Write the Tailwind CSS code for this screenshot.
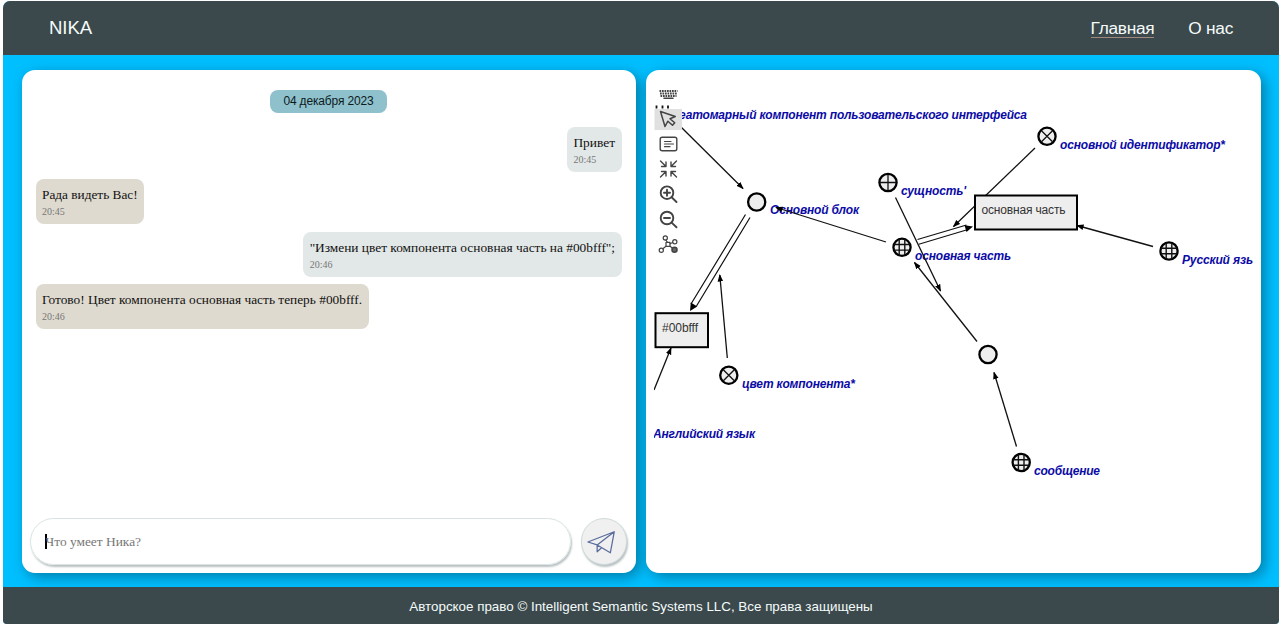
<!DOCTYPE html>
<html lang="ru">
<head>
<meta charset="utf-8">
<title>NIKA</title>
<script src="https://cdn.jsdelivr.net/npm/@tailwindcss/browser@4"></script>
</head>
<body class="h-[624px] overflow-hidden bg-white pl-[3px] pr-px pt-px font-['Liberation_Sans',sans-serif]">
<div class="flex h-[623px] flex-col overflow-hidden rounded-t-[7px] rounded-b-[4px] bg-[#00bfff]">
  <header class="flex h-[54px] shrink-0 items-center justify-between bg-[#3b494c] pl-[46px] pr-[46px] text-[#f5fbfa]">
    <div class="text-[18.6px] leading-none tracking-[-0.1px]">NIKA</div>
    <nav class="flex gap-[34px] text-[17.3px] leading-[18px] tracking-[-0.28px]">
      <a class="border-b border-[#a1887f]">Главная</a>
      <a>О нас</a>
    </nav>
  </header>

  <main class="flex h-[532px] shrink-0 gap-[10px] pl-[19px] pr-[18px] pt-[15px]">
    <section class="flex h-[503px] w-[614px] flex-col rounded-[13px] bg-white px-[8px] pt-[20px] shadow-[4px_4px_14px_rgba(0,0,0,0.35)]">
      <div class="flex flex-1 flex-col gap-[7.4px] pl-[5.5px] pr-[6.5px] font-['Liberation_Serif',serif]">
        <div class="mb-[6.5px] flex h-[23px] w-[117px] items-center justify-center self-center rounded-[8px] bg-[#8fc1cc] font-['Liberation_Sans',sans-serif] text-[12px] tracking-[-0.15px] text-[#0d1a1d]"><span class="pb-px">04 декабря 2023</span></div>
        <div class="h-[45px] self-end rounded-[8px] bg-[#e2e8e7] px-[6.5px] pt-[8px]">
          <p class="text-[13.4px] leading-[16px] text-[#111]">Привет</p>
          <p class="pt-[3px] text-[10px] leading-[12px] text-[#777]">20:45</p>
        </div>
        <div class="h-[45px] self-start rounded-[8px] bg-[#dedacf] px-[6.5px] pt-[8px]">
          <p class="text-[13.3px] leading-[16px] text-[#111]">Рада видеть Вас!</p>
          <p class="pt-[3px] text-[10px] leading-[12px] text-[#777]">20:45</p>
        </div>
        <div class="h-[45px] self-end rounded-[8px] bg-[#e2e8e7] px-[6.5px] pt-[8px]">
          <p class="text-[13.37px] leading-[16px] text-[#111]">"Измени цвет компонента основная часть на #00bfff";</p>
          <p class="pt-[3px] text-[10px] leading-[12px] text-[#777]">20:46</p>
        </div>
        <div class="h-[45px] self-start rounded-[8px] bg-[#dedacf] px-[6.5px] pt-[8px]">
          <p class="text-[13.35px] leading-[16px] text-[#111]">Готово! Цвет компонента основная часть теперь #00bfff.</p>
          <p class="pt-[3px] text-[10px] leading-[12px] text-[#777]">20:46</p>
        </div>
      </div>
      <form class="flex h-[55px] shrink-0 items-start gap-[10px]">
        <div class="flex h-[47px] w-[541px] items-center rounded-full border border-[#d9e3e4] pl-[14px] font-['Liberation_Serif',serif] text-[13.4px] text-[#777] shadow-[1px_2px_2px_rgba(80,100,105,0.4)]"><span class="h-[15px] w-[1.5px] bg-black"></span><span class="-ml-px pt-[2px]">Что умеет Ника?</span></div>
        <button type="button" class="flex h-[47px] w-[46px] items-center justify-center rounded-full border border-[#cfdada] bg-[#f0f0f0] shadow-[1px_2px_2px_rgba(80,100,105,0.4)]">
          <svg class="size-[44px]" viewBox="582 519 45 45" fill="none" stroke="#5a6c9d" stroke-width="1.3" stroke-linejoin="round"><path d="M588 541.5 615 531 611 552.500 597.500 544.500ZM615 531 597.500 544.500V551.500L602 547.300"/></svg>
        </button>
      </form>
    </section>

    <section class="h-[503px] w-[615px] rounded-[13px] bg-white px-[8px] pt-[8px] shadow-[4px_4px_14px_rgba(0,0,0,0.35)]">
      <svg class="block h-[486px] w-[599px]" viewBox="654 78 599 486">
        <defs>
          <marker id="arrow" viewBox="0 0 8 6" refX="7" refY="3" markerWidth="7.500" markerHeight="6.500" markerUnits="userSpaceOnUse" orient="auto"><path d="M0 0 8 3 0 6Z"/></marker>
          <g id="node"><circle r="8.6" fill="#eee" stroke="#000" stroke-width="2.3"/></g>
          <g id="relation"><use href="#node"/><path d="M-5.5-5.5 5.5 5.5M-5.5 5.5 5.5-5.5" stroke="#111" stroke-width="1.3"/></g>
          <g id="role"><use href="#node"/><path d="M0-8V8M-8 0H8" stroke="#111" stroke-width="1.3"/></g>
          <g id="class"><use href="#node"/><path d="M-2.8-8V8M2.8-8V8M-8-2.8H8M-8 2.8H8" stroke="#111" stroke-width="1.4"/></g>
        </defs>

        <g font-family="Liberation Sans, Arial, sans-serif" font-size="12" font-weight="bold" font-style="italic" fill="#0b0ba6">
          <text x="672" y="119" textLength="355">неатомарный компонент пользовательского интерфейса</text>
          <text x="1060" y="149" textLength="165">основной идентификатор*</text>
          <text x="901" y="195" textLength="65">сущность'</text>
          <text x="770" y="214" textLength="89">Основной блок</text>
          <text x="915" y="260" textLength="96">основная часть</text>
          <text x="1182" y="264" textLength="71">Русский язь</text>
          <text x="742" y="388" textLength="113">цвет компонента*</text>
          <text x="653" y="438" textLength="102">Английский язык</text>
          <text x="1034" y="475" textLength="66">сообщение</text>
        </g>

        <g fill="none" stroke="#111" stroke-width="1.3">
          <path d="M680 126 743 188.500" marker-end="url(#arrow)"/>
          <path d="M886 242 776 207.500" marker-end="url(#arrow)"/>
          <path d="M727.300 358 719.800 275" marker-end="url(#arrow)"/>
          <path d="M654 390 671 348" marker-end="url(#arrow)"/>
          <path d="M1035 148 953.500 226.500" marker-end="url(#arrow)"/>
          <path d="M895.500 197.500 940.500 291" marker-end="url(#arrow)"/>
          <path d="M977 341.500 914.500 262.500" marker-end="url(#arrow)"/>
          <path d="M1016.500 446.500 994 372.500" marker-end="url(#arrow)"/>
          <path d="M1153 246.500 1077 225.500" marker-end="url(#arrow)"/>
          <path d="M745.500 214.500 691 304M750 217.500 696.500 306M917.500 239.500 966.500 225M918.800 244.300 968 229.500" stroke-width="1.2"/>
        </g>
        <path d="M690 311 690.800 302.500 697.300 306.500ZM973 226.500 964.500 225.300 966.500 232Z"/>

        <g fill="#eee" stroke="#000" stroke-width="2">
          <rect x="975" y="195.500" width="102" height="34"/>
          <rect x="655.500" y="313.200" width="52.500" height="34"/>
        </g>
        <g font-family="Liberation Sans, Arial, sans-serif" font-size="12" fill="#333">
          <text x="981.500" y="214" textLength="84">основная часть</text>
          <text x="662" y="331.500" textLength="36">#00bfff</text>
        </g>

        <use href="#relation" x="1047" y="136.300"/>
        <use href="#role" x="888" y="182.500"/>
        <use href="#node" x="756.700" y="202"/>
        <use href="#class" x="902" y="247.300"/>
        <use href="#class" x="1169" y="251"/>
        <use href="#relation" x="728.800" y="375.200"/>
        <use href="#node" x="988" y="354.500"/>
        <use href="#class" x="1021.200" y="462.500"/>

        <path d="M656.500 105.500V108.500M662.500 105.500V108.500M668 105.500V108.500" stroke="#111" stroke-width="1.8"/>
        <rect x="654.500" y="109" width="27.500" height="21" fill="#e0e0e0"/>
        <g fill="none" stroke="#444" stroke-width="1.4" stroke-linecap="round" stroke-linejoin="round">
          <path d="M659.500 91H677.500M660 93.500H677M660.500 96H676.500" stroke-width="1.900" stroke-dasharray="1.700 .8" stroke-linecap="butt"/>
          <path d="M664 98.200H673" stroke-width="1.500"/>
          <path d="M660.500 111.500 665 126.500 667.900 121.200 672.500 125.300 674.700 122.800 670 118.700 675.300 116.500Z" stroke-width="1.500"/>
          <rect x="660.200" y="137.200" width="16.600" height="13.600" rx="2"/>
          <path d="M664.500 141.500H671M664.500 144H673.500M664.500 146.700H670" stroke-width="1.200"/>
          <path d="M660.500 161 666 166.500M666 162V166.500H661.500M676.500 161 671 166.500M671 162V166.500H675.500M660.500 177 666 171.500M661.500 171.500H666V176M676.500 177 671 171.500M671 176V171.500H675.500"/>
          <g stroke-width="1.900"><circle cx="667" cy="192.700" r="6.300"/><path d="M671.600 197.300 676.500 202M664 192.700H670M667 189.700V195.700"/><circle cx="667" cy="218" r="6.300"/><path d="M671.600 222.600 676.500 227.300M664 218H670"/></g>
          <g stroke-width="1.200"><circle cx="665.300" cy="238" r="2.100"/><circle cx="674.800" cy="241.800" r="2.100"/><circle cx="661.300" cy="250.300" r="2.100"/><rect x="666" y="242.300" width="4" height="4"/><path d="M666 240 667.300 242.300M670 243.700 672.700 242.500M666 246.300 662.800 248.700M670 246.300 673 248.500"/><circle cx="674.500" cy="249.800" r="2.500" fill="#666" stroke-width="1.600"/></g>
        </g>
      </svg>
    </section>
  </main>

  <footer class="flex flex-1 items-center justify-center bg-[#3b494c] text-[13.38px] text-[#f5fbfa]"><span class="pt-[4px]">Авторское право © Intelligent Semantic Systems LLC, Все права защищены</span></footer>
</div>
</body>
</html>
